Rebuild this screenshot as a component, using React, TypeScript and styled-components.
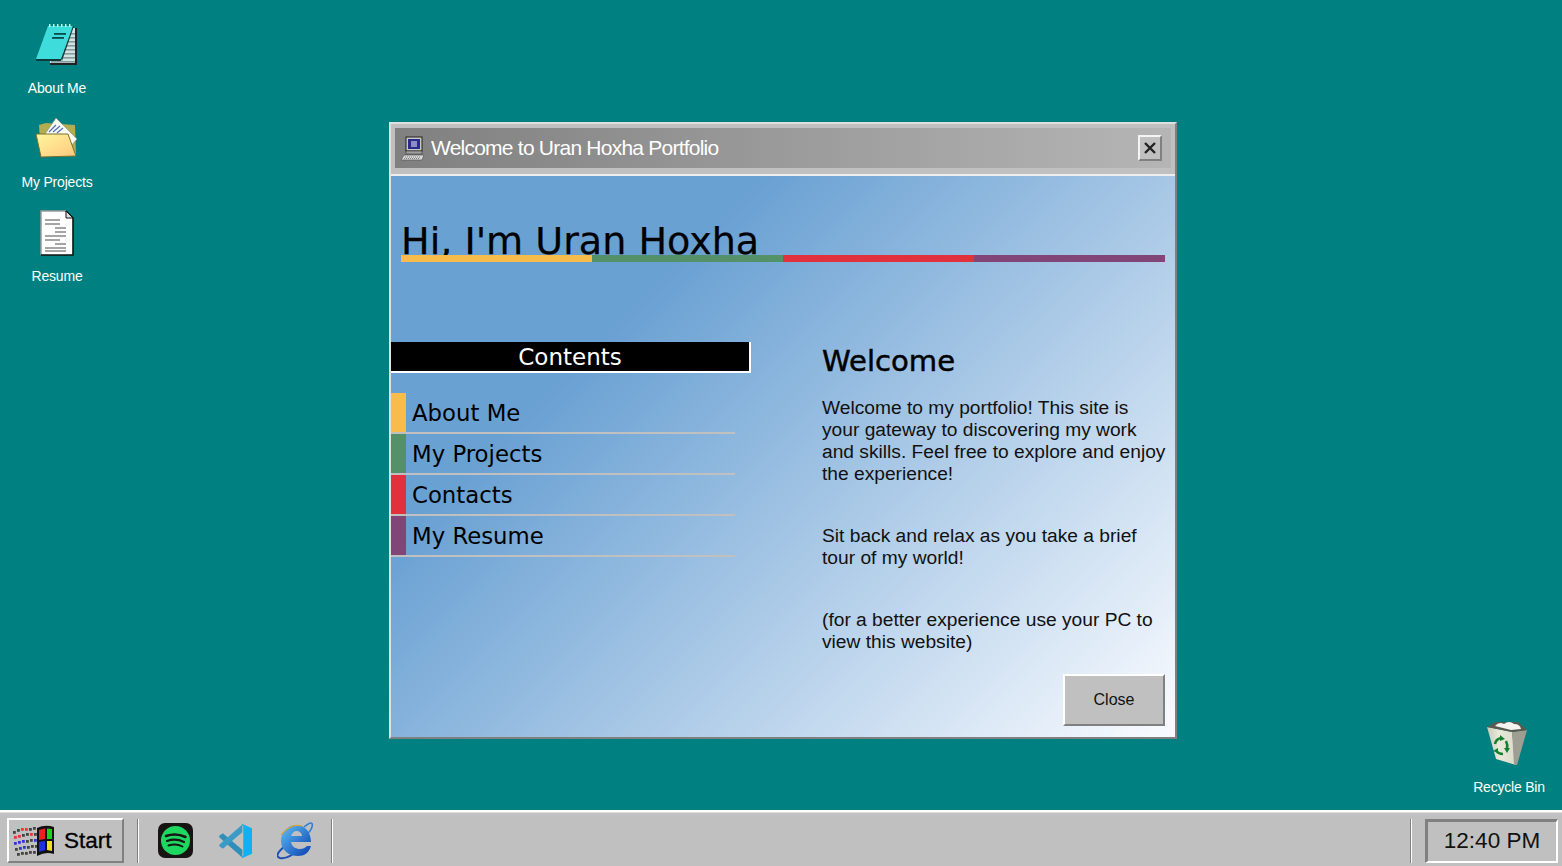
import React from "react";
import styled, { createGlobalStyle } from "styled-components";

const Global = createGlobalStyle`
  html, body { margin: 0; padding: 0; height: 100%; overflow: hidden; }
  #root { height: 100%; }
  * { box-sizing: border-box; }
`;

const Page = styled.div`
  width: 1562px; height: 866px; display: flex; flex-direction: column;
  background: #008080; font-family: "Liberation Sans", Arial, sans-serif;
`;
const Desktop = styled.main`
  position: relative; flex: 1; padding: 21px 0 0 7px;
  display: flex; flex-direction: column; align-items: flex-start;
`;
const DesktopIcon = styled.div`
  width: 100px; height: 94px; display: flex; flex-direction: column; align-items: center;
`;
const IconBox = styled.div`
  height: 48px; display: flex; align-items: center; justify-content: center;
`;
const IconLabel = styled.span`
  margin-top: 10px; color: #fff; font-size: 14px; letter-spacing: -0.2px; line-height: 18px; white-space: nowrap;
`;
const RecycleSpot = styled.div`
  position: absolute; left: 1459px; top: 720px;
`;
const Win = styled.section`
  position: absolute; left: 389px; top: 122px; width: 788px; height: 617px;
  background: #c0c0c0; display: flex; flex-direction: column;
  border-style: solid; border-width: 2px;
  border-color: #dfdfdf #808080 #808080 #dfdfdf;
`;
const TitleArea = styled.div`
  padding: 4px 4px 6px 4px; border-bottom: 2px solid #eeeeee; height: 52px;
`;
const TitleBar = styled.header`
  height: 40px; background: linear-gradient(90deg, #808080, #b5b5b5);
  display: flex; align-items: center; padding: 0 9px 0 6px;
`;
const TitleText = styled.h1`
  margin: 0 0 0 6px; flex: 1; color: #fff; font-size: 21px; font-weight: 400; letter-spacing: -0.77px;
`;
const XButton = styled.button`
  width: 24px; height: 26px; padding: 0; background: #c0c0c0; display: flex; align-items: center; justify-content: center;
  border-style: solid; border-width: 2px; border-color: #f4f4f4 #808080 #808080 #f4f4f4;
`;
const Body = styled.div`
  flex: 1; padding: 39px 10px 0 0; position: relative;
  background: linear-gradient(135deg, #6aa1d3 28%, #f6f9fe 98%);
`;
const Heading = styled.div`
  margin-left: 10px; height: 46px; position: relative;
`;
const HeadingText = styled.h2`
  margin: 0; padding-top: 3px; font-family: "DejaVu Sans", Verdana, sans-serif; font-size: 38.1px; font-weight: 400;
  line-height: 46px; color: #000; white-space: nowrap; -webkit-text-stroke: 0.25px #000;
`;
const ColorBar = styled.div`
  position: absolute; left: 0; right: 0; top: 40px; height: 7px; display: flex;
`;
const ColorSeg = styled.span<{ $c: string }>`
  flex: 1; background: ${(p) => p.$c};
`;
const Columns = styled.div`
  margin-top: 81px; display: grid; grid-template-columns: 431px 1fr;
`;
const LeftCol = styled.nav`
  display: flex; flex-direction: column;
`;
const ContentsBar = styled.div`
  width: 360px; height: 31px; background: #000; color: #fff; text-align: center;
  font-family: "DejaVu Sans", Verdana, sans-serif; font-size: 23px; line-height: 31px;
  border-right: 2px solid #fff; border-bottom: 2px solid #fff; margin-bottom: 20px;
`;
const MenuRow = styled.div<{ $c: string }>`
  width: 344px; height: 41px; display: flex; align-items: stretch;
  border-bottom: 2px solid #c0c0c0;
  &::before { content: ""; width: 15px; background: ${(p) => p.$c}; }
`;
const MenuLabel = styled.span`
  margin-left: 6px; font-family: "DejaVu Sans", Verdana, sans-serif; font-size: 22.8px; line-height: 41px;
  color: #000;
`;
const RightCol = styled.article`
  display: flex; flex-direction: column; color: #000;
`;
const WelcomeTitle = styled.h3`
  margin: 0 0 17px; font-family: "DejaVu Sans", Verdana, sans-serif; font-size: 29.1px; font-weight: 400;
  line-height: 38px; -webkit-text-stroke: 0.5px #000;
`;
const Para = styled.p`
  margin: 0 0 40px; font-size: 19.2px; line-height: 22px; white-space: nowrap; color: #111;
`;
const CloseBtn = styled.button`
  position: absolute; right: 10px; bottom: 11px; width: 102px; height: 52px;
  background: #c0c0c0; font-family: "Liberation Sans", Arial, sans-serif; font-size: 16px; color: #111;
  border-style: solid; border-width: 2px; border-color: #fff #808080 #808080 #fff;
`;
const Taskbar = styled.footer`
  height: 56px; background: #c0c0c0; border-top: 2px solid #ffffff; box-shadow: inset 0 1px 0 #dfdfdf;
  display: flex; align-items: center; padding: 6px 4px 3px 7px;
`;
const StartBtn = styled.button`
  width: 117px; height: 45px; background: #c0c0c0; padding: 0 0 0 4px; margin-right: 13px;
  display: flex; align-items: center; gap: 9px;
  font-family: "Liberation Sans", Arial, sans-serif; font-size: 22.5px; color: #000; -webkit-text-stroke: 0.3px #000;
  border-style: solid; border-width: 2px; border-color: #fff #808080 #808080 #fff;
`;
const Divider = styled.div`
  width: 2px; height: 44px; background: #fff; border-left: 1px solid #808080;
`;
const QuickLaunch = styled.div`
  display: flex; align-items: center; gap: 25px; margin: 0 17px 0 19px;
`;
const Spacer = styled.div` flex: 1; `;
const Clock = styled.div`
  margin-left: 13px; width: 133px; height: 44px; display: flex; align-items: center; justify-content: center;
  font-size: 22.5px; color: #111;
  border-style: solid; border-width: 3px 2px 2px 3px; border-color: #808080 #fff #fff #808080;
`;

const NotepadIcon = () => (
  <svg width="44" height="44" viewBox="0 0 44 44">
    <polygon points="38,5 42,5 42,42 15,42 15,36" fill="#222" />
    <polygon points="38,5 40,5 40,40 15,40 15,36" fill="#cfe4e4" />
    {[10, 14, 18, 22, 26, 30, 34, 38].map((y) => (
      <rect key={y} x="16" y={y} width="24" height="1.6" fill={y % 8 ? "#8a9a9a" : "#fff"} />
    ))}
    <polygon points="13,3 38,3 26,36 1,36" fill="#3fdcdc" />
    <polygon points="1,36 26,36 26,38 1,38" fill="#0b3b3b" />
    <polygon points="38,3 39,3 27,38 26,36" fill="#0b3b3b" />
    <rect x="19" y="10" width="12" height="1.8" fill="#0a4a4a" />
    <rect x="17" y="14" width="12" height="1.8" fill="#0a4a4a" />
    {[14, 18, 22, 26, 30, 34].map((x) => (
      <rect key={x} x={x} y="1" width="1.4" height="3" fill="#e8ffff" />
    ))}
  </svg>
);

const FolderIcon = () => (
  <svg width="44" height="44" viewBox="0 0 44 44">
    <defs>
      <linearGradient id="fold" x1="0" y1="0" x2="1" y2="1">
        <stop offset="0" stopColor="#fff79c" />
        <stop offset="1" stopColor="#ffc77e" />
      </linearGradient>
    </defs>
    <path d="M4 8 L11 6 L40 8 L41 38 L6 38 Z" fill="#b3ad4f" />
    <polygon points="21,1 42,22 35,30 8,20" fill="#fbfbf6" stroke="#8d8d80" strokeWidth="0.6" />
    <path d="M14 15 L21 8 M18 15 L25 9 M22 16 L28 11" stroke="#5570b8" strokeWidth="1.2" />
    <polygon points="1,17 33,17 41,39 6,40" fill="url(#fold)" stroke="#76702a" strokeWidth="1" />
  </svg>
);

const DocIcon = () => (
  <svg width="36" height="46" viewBox="0 0 36 46">
    <polygon points="2,1 27,1 34,8 34,45 2,45" fill="#fff" />
    <path d="M2 45 V1 H27" stroke="#9a9a9a" strokeWidth="1.5" fill="none" />
    <path d="M27 1 L34 8 V45 H2" stroke="#111" strokeWidth="1.6" fill="none" />
    <polygon points="27,1 27,8 34,8" fill="#ddd" stroke="#111" strokeWidth="1" />
    {[
      [6, 21, 10], [6, 21, 14], [16, 27, 18], [16, 27, 22], [6, 27, 26],
      [6, 21, 30], [16, 27, 34], [6, 27, 38], [6, 27, 41],
    ].map(([a, b, y]) => (
      <line key={y} x1={a} x2={b} y1={y} y2={y} stroke="#9b9b9b" strokeWidth="1.8" />
    ))}
  </svg>
);

const RecycleIcon = () => (
  <svg width="46" height="46" viewBox="-1 0 46 46">
    <defs>
      <linearGradient id="bin" x1="0" y1="0" x2="1" y2="0">
        <stop offset="0" stopColor="#c9c9bb" />
        <stop offset="0.4" stopColor="#e9e9da" />
        <stop offset="1" stopColor="#dcdccd" />
      </linearGradient>
    </defs>
    <polygon points="0,6 25,11 29,44 9,38" fill="url(#bin)" />
    <polygon points="25,11 40,9 30,44 27,44" fill="#9e9e92" />
    <polygon points="0,6 9,1 31,1 40,9 25,11" fill="#5a5a50" />
    <path d="M8 5 Q12 0 17 3 Q22 -1 27 3 Q33 3 34 8 L24 9 Z" fill="#f4f4f0" />
    <g fill="none" stroke="#138030" strokeWidth="2.6">
      <path d="M8 23 Q9 18 14 17" />
      <path d="M19 20 Q21 24 20 28" />
      <path d="M16 33 Q11 33 9 29" />
    </g>
    <polygon points="13,14 18,18 13,20" fill="#138030" />
    <polygon points="17,27 23,27 20,32" fill="#138030" />
    <polygon points="6,30 11,27 11,32" fill="#138030" />
  </svg>
);

const ComputerIcon = () => (
  <svg width="24" height="25" viewBox="0 0 24 25">
    <rect x="5" y="1" width="16" height="14" fill="#c8c8c8" stroke="#222" strokeWidth="1" />
    <rect x="7" y="3" width="12" height="10" fill="#2b2a8c" />
    <rect x="10" y="5" width="6" height="6" fill="#8d8dc6" />
    <rect x="5" y="15" width="16" height="3" fill="#a0a0a0" stroke="#333" strokeWidth="0.6" />
    <polygon points="3,19 23,19 21,24 0,24" fill="#d8d8d8" stroke="#555" strokeWidth="0.7" />
    <path d="M4 21 H20 M3 22.5 H19" stroke="#666" strokeWidth="0.8" strokeDasharray="1 1" />
  </svg>
);

const CloseX = () => (
  <svg width="14" height="14" viewBox="0 0 14 14">
    <path d="M2 2 L12 12 M12 2 L2 12" stroke="#222" strokeWidth="2.4" />
  </svg>
);

const WinFlag = () => (
  <svg width="42" height="32" viewBox="0 0 42 32">
    {[
      [0, 6, "#444"], [4, 4, "#444"], [8, 3, "#e33"], [12, 3, "#e33"], [16, 3, "#444"], [20, 2, "#444"],
      [1, 11, "#e33"], [5, 10, "#e33"], [9, 9, "#444"], [13, 8, "#444"], [17, 8, "#e33"], [21, 8, "#444"],
      [1, 17, "#33d"], [5, 16, "#33d"], [9, 15, "#33d"], [13, 15, "#444"], [17, 14, "#444"], [21, 14, "#33d"],
      [2, 23, "#444"], [6, 22, "#33d"], [10, 21, "#33d"], [14, 21, "#444"], [18, 20, "#444"], [22, 20, "#444"],
      [4, 28, "#444"], [8, 27, "#444"], [12, 27, "#444"], [16, 26, "#444"], [20, 26, "#444"],
    ].map(([x, y, c], i) => (
      <rect key={i} x={x as number} y={y as number} width="2.8" height="2.8" fill={c as string} />
    ))}
    <path d="M24 3 Q32 -1 41 2 L41 29 Q33 26 24 31 Z" fill="#111" />
    <polygon points="26,5 32,3.5 32,14 26,15" fill="#ef1f1f" />
    <polygon points="34,3.5 39,4 39,14 34,14" fill="#1fd01f" />
    <polygon points="26,17 32,16 32,25 26,27" fill="#1f2fe8" />
    <polygon points="34,16 39,16 39,26 34,25" fill="#efe01f" />
  </svg>
);

const Spotify = () => (
  <svg width="35" height="35" viewBox="0 0 35 35">
    <rect width="35" height="35" rx="7" fill="#191414" />
    <circle cx="17.5" cy="17.5" r="14.5" fill="#1ed760" />
    <g fill="none" stroke="#191414" strokeLinecap="round">
      <path d="M8 13 Q18 9.5 27.5 14" strokeWidth="2.6" />
      <path d="M9 18 Q18 15 26 19" strokeWidth="2.2" />
      <path d="M10.5 22.5 Q18 20 24.5 23.5" strokeWidth="1.9" />
    </g>
  </svg>
);

const VSCode = () => (
  <svg width="34" height="36" viewBox="0 0 35 36">
    <path d="M2 12 L5 10 L25 27 L25 35 L1 14 Z" fill="#2f8fb8" />
    <path d="M2 24 L5 26 L25 9 L25 1 L1 22 Z" fill="#3a9cc6" />
    <path d="M24 0 L35 5 V31 L24 36 L26 33 V3 Z" fill="#0fb0f4" />
  </svg>
);

const IE = () => (
  <svg width="37" height="39" viewBox="0 0 37 39">
    <defs>
      <linearGradient id="ie" x1="0" y1="0" x2="1" y2="1">
        <stop offset="0" stopColor="#5fc0f5" />
        <stop offset="1" stopColor="#0a3fb0" />
      </linearGradient>
    </defs>
    <path d="M27 6 Q37 -2 35 6 Q34 10 28 15" fill="none" stroke="#2f7fd8" strokeWidth="1.6" />
    <path d="M8 25 Q-4 35 3 37 Q9 38 16 33" fill="none" stroke="#1b4fb8" strokeWidth="2" />
    <path
      fillRule="evenodd"
      fill="url(#ie)"
      d="M19 4 C28 4 34 11 34 21 L14 21 C15 26 19 28 23 28 C26 28 28 27 30 25 L34 25 C32 32 27 35 21 35 C12 35 4 29 4 20 C4 11 11 4 19 4 Z M14 15 L25 15 C25 12 22 10 19.5 10 C17 10 15 12 14 15 Z"
    />
    <path d="M4 14 Q14 2 25 5" fill="none" stroke="#d7a53a" strokeWidth="1.2" />
  </svg>
);

const icons = [
  { label: "About Me", icon: <NotepadIcon /> },
  { label: "My Projects", icon: <FolderIcon /> },
  { label: "Resume", icon: <DocIcon /> },
];
const menu = [
  { label: "About Me", c: "#f7bc4b" },
  { label: "My Projects", c: "#549068" },
  { label: "Contacts", c: "#e1313d" },
  { label: "My Resume", c: "#824578" },
];
const colors = ["#f7bc4b", "#549068", "#e1313d", "#824578"];

export default function App() {
  return (
    <Page>
      <Global />
      <Desktop>
        {icons.map((i) => (
          <DesktopIcon key={i.label}>
            <IconBox>{i.icon}</IconBox>
            <IconLabel>{i.label}</IconLabel>
          </DesktopIcon>
        ))}
        <RecycleSpot>
          <DesktopIcon>
            <IconBox><RecycleIcon /></IconBox>
            <IconLabel>Recycle Bin</IconLabel>
          </DesktopIcon>
        </RecycleSpot>
        <Win>
          <TitleArea>
            <TitleBar>
              <ComputerIcon />
              <TitleText>Welcome to Uran Hoxha Portfolio</TitleText>
              <XButton aria-label="Close"><CloseX /></XButton>
            </TitleBar>
          </TitleArea>
          <Body>
            <Heading>
              <HeadingText>Hi, I'm Uran Hoxha</HeadingText>
              <ColorBar>
                {colors.map((c) => <ColorSeg key={c} $c={c} />)}
              </ColorBar>
            </Heading>
            <Columns>
              <LeftCol>
                <ContentsBar>Contents</ContentsBar>
                {menu.map((m) => (
                  <MenuRow key={m.label} $c={m.c}><MenuLabel>{m.label}</MenuLabel></MenuRow>
                ))}
              </LeftCol>
              <RightCol>
                <WelcomeTitle>Welcome</WelcomeTitle>
                <Para>Welcome to my portfolio! This site is<br />your gateway to discovering my work<br />and skills. Feel free to explore and enjoy<br />the experience!</Para>
                <Para>Sit back and relax as you take a brief<br />tour of my world!</Para>
                <Para>(for a better experience use your PC to<br />view this website)</Para>
              </RightCol>
            </Columns>
            <CloseBtn>Close</CloseBtn>
          </Body>
        </Win>
      </Desktop>
      <Taskbar>
        <StartBtn><WinFlag />Start</StartBtn>
        <Divider />
        <QuickLaunch>
          <Spotify />
          <VSCode />
          <IE />
        </QuickLaunch>
        <Divider />
        <Spacer />
        <Divider />
        <Clock>12:40 PM</Clock>
      </Taskbar>
    </Page>
  );
}
